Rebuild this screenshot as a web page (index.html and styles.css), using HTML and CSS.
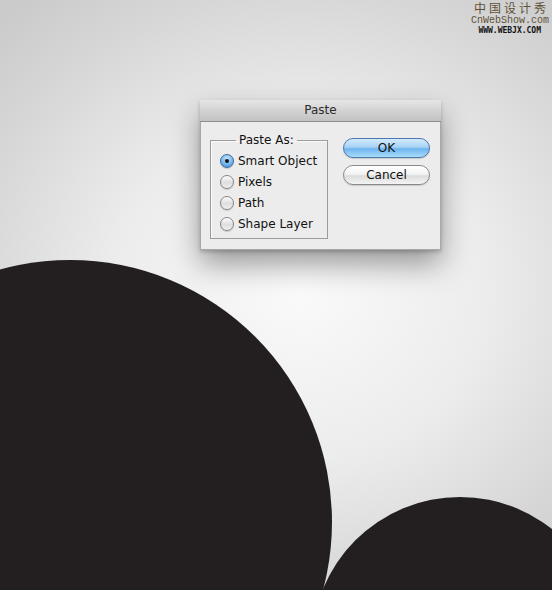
FILE: index.html
```html
<!DOCTYPE html>
<html lang="en">
  <head>
    <meta charset="UTF-8" />
    <title>Paste</title>
    <link rel="stylesheet" href="styles.css">
  </head>
  <body>
    <!-- Black shapes on the artboard -->
    <svg class="artboard" width="552" height="590" viewBox="0 0 552 590">
      <circle cx="70" cy="522" r="262" fill="#231f20" />
      <circle cx="460" cy="645" r="148" fill="#231f20" />
    </svg>

    <!-- Watermark -->
    <div class="watermark">
      <div class="wm-cn">中国设计秀</div>
      <div class="wm-site">CnWebShow.com</div>
      <div class="wm-url">WWW.WEBJX.COM</div>
    </div>

    <!-- Paste dialog -->
    <div class="dialog">
      <div class="title-bar">Paste</div>
      <div class="dialog-body">
        <fieldset class="paste-as">
          <legend>Paste As:</legend>
          <label class="option"><span class="radio checked"></span>Smart Object</label>
          <label class="option"><span class="radio"></span>Pixels</label>
          <label class="option"><span class="radio"></span>Path</label>
          <label class="option"><span class="radio"></span>Shape Layer</label>
        </fieldset>
        <div class="buttons">
          <button class="btn btn-default">OK</button>
          <button class="btn">Cancel</button>
        </div>
      </div>
    </div>
  </body>
</html>
```

FILE: styles.css
```css
* {
  box-sizing: border-box;
}
body {
  margin: 0;
  width: 552px;
  height: 590px;
  overflow: hidden;
  position: relative;
  font-family: "DejaVu Sans", sans-serif;
  background: radial-gradient(ellipse 420px 380px at 300px 290px, #fafafa 0%, #ececec 45%, #d6d6d6 80%, #cbcbcb 100%);
  padding-top: 100px;
}
.artboard {
  position: absolute;
  left: 0;
  top: 0;
}
.watermark {
  position: absolute;
  top: 1px;
  right: 3px;
  width: 84px;
  color: #5e5238;
  text-align: right;
}
.wm-cn {
  font-family: "Noto Sans CJK SC", sans-serif;
  font-size: 12px;
  line-height: 14px;
  letter-spacing: 3px;
}
.wm-site {
  font-family: "Liberation Mono", monospace;
  font-size: 10px;
  line-height: 11px;
}
.wm-url {
  font-family: "DejaVu Sans Mono", monospace;
  font-size: 8px;
  line-height: 9px;
  font-weight: bold;
  color: #111;
  padding-right: 8px;
}

/* dialog */
.dialog {
  position: relative;
  margin-left: 200px;
  width: 241px;
  height: 150px;
  background-color: #ececec;
  border: 1px solid #a8a8a8;
  border-top: none;
  box-shadow: 0 14px 28px rgba(0, 0, 0, 0.38), 0 2px 4px rgba(0, 0, 0, 0.2);
}
.title-bar {
  height: 22px;
  line-height: 21px;
  text-align: center;
  font-size: 12px;
  color: #2a2a2a;
  background: linear-gradient(#e6e6e6, #cfcfcf 60%, #c2c2c2);
  border-bottom: 1px solid #8e8e8e;
  margin: 0 -1px;
}
.dialog-body {
  display: flex;
  align-items: flex-start;
  padding: 11px 10px 0 9px;
}
.paste-as {
  margin: 0;
  width: 118px;
  height: 106px;
  padding: 3px 0 0 9px;
  border: 1px solid #9c9c9c;
  box-shadow: 1px 1px 0 #fafafa inset;
}
.paste-as legend {
  font-size: 12px;
  color: #111;
  padding: 0 3px;
  margin-left: 16px;
}
.option {
  display: flex;
  align-items: center;
  height: 21.2px;
  font-size: 12px;
  color: #111;
}
.radio {
  width: 14px;
  height: 14px;
  border-radius: 50%;
  margin-right: 4px;
  border: 1px solid #858585;
  background: linear-gradient(#fdfdfd, #dedede 55%, #f0f0f0);
  box-shadow: 0 1px 1px rgba(0, 0, 0, 0.15);
  position: relative;
}
.radio.checked {
  border-color: #3d6aa0;
  background: radial-gradient(circle at 50% 30%, #c6e3fa 0%, #74b6ee 55%, #3f8cd9 100%);
}
.radio.checked::after {
  content: "";
  position: absolute;
  left: 4px;
  top: 4px;
  width: 4px;
  height: 4px;
  border-radius: 50%;
  background-color: #111;
}
.buttons {
  display: flex;
  flex-direction: column;
  gap: 7px;
  margin-left: 15px;
  padding-top: 5px;
}
.btn {
  width: 87px;
  height: 20px;
  border-radius: 10px;
  border: 1px solid #8a8a8a;
  background: linear-gradient(#ffffff, #f3f3f3 45%, #dcdcdc 55%, #f4f4f4);
  font-family: "DejaVu Sans", sans-serif;
  font-size: 12px;
  color: #111;
  padding: 0;
  box-shadow: 0 1px 1px rgba(0, 0, 0, 0.15);
}
.btn-default {
  border-color: #4b78ad;
  background: linear-gradient(#d3ebfc, #a8d3f5 45%, #6eb4ef 55%, #a9dcfb);
}
```
